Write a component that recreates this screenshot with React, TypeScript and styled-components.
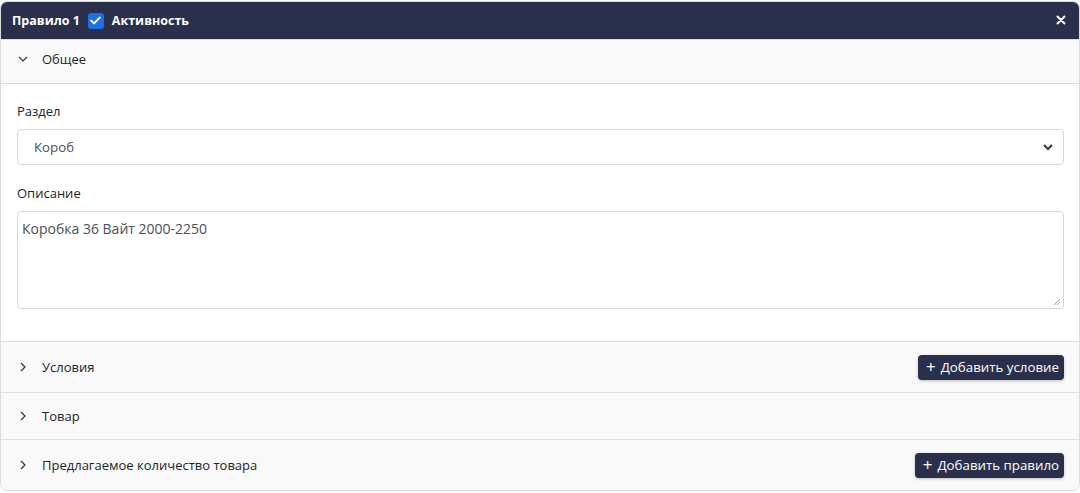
import React from "react";
import styled, { createGlobalStyle } from "styled-components";

const Global = createGlobalStyle`
  html, body { margin: 0; padding: 0; background: #ffffff; }
  body { font-family: "Open Sans", "Noto Sans", sans-serif; color: #212529; }
  * { box-sizing: border-box; }
`;

const Card = styled.div`
  margin: 1px 0 0 0;
  width: 1080px;
  border: 1px solid #dcdcdc;
  border-radius: 7px;
  overflow: hidden;
  background: #fff;
`;

const Header = styled.div`
  height: 37px;
  background: #2a2f4b;
  display: flex;
  align-items: center;
  padding: 0 12px 0 11px;
  color: #fff;
  font-weight: 700;
  font-size: 12.5px;
`;

const Title = styled.span`
  margin-right: 8px;
`;

const Check = styled.span`
  width: 16px;
  height: 16px;
  border-radius: 3px;
  background: #1f6fe5;
  display: inline-flex;
  align-items: center;
  justify-content: center;
  margin-right: 8px;
`;

const Spacer = styled.div`
  flex: 1;
`;

const Close = styled.span`
  display: inline-flex;
  align-items: center;
  justify-content: center;
  width: 12px;
  height: 12px;
  margin-top: -1px;
`;

const SectionHead = styled.div<{ $h: number; $lift?: number }>`
  height: ${(p) => p.$h}px;
  background: #f9f9f9;
  border-top: 1px solid #dedede;
  display: flex;
  align-items: center;
  padding: 0 15px ${(p) => p.$lift ?? 0}px 17px;
  font-size: 13px;
  color: #212529;
  &:first-child { border-top: none; }
`;

const Chevron = styled.span`
  width: 10px;
  height: 10px;
  display: inline-flex;
  align-items: center;
  justify-content: center;
  margin-right: 14px;
`;

const SectionBody = styled.div`
  border-top: 1px solid #dedede;
  padding: 18px 15px 32px 16px;
  display: flex;
  flex-direction: column;
`;

const Label = styled.label`
  font-size: 13px;
  color: #212529;
  margin-bottom: 9px;
  line-height: 18px;
`;

const Select = styled.div`
  height: 36px;
  border: 1px solid #d4d6da;
  border-radius: 4px;
  display: flex;
  align-items: center;
  padding: 0 9px 0 16px;
  font-size: 13.3px;
  color: #495057;
  margin-bottom: 19px;
`;

const Textarea = styled.div`
  position: relative;
  height: 98px;
  border: 1px solid #d4d6da;
  border-radius: 4px;
  padding: 8px 4px;
  font-size: 14px;
  color: #495057;
  line-height: 18px;
`;

const Grip = styled.span`
  position: absolute;
  right: 2px;
  bottom: 2px;
  width: 8px;
  height: 8px;
  display: flex;
`;

const AddButton = styled.button`
  height: 25px;
  background: #2a2f4b;
  color: #fff;
  border: none;
  border-radius: 4px;
  font-family: inherit;
  font-size: 13.3px;
  padding: 0 5px 0 8px;
  display: inline-flex;
  align-items: center;
  gap: 5px;
  box-shadow: 0 1px 3px rgba(0, 0, 0, 0.25);
  cursor: pointer;
`;

const Plus = styled.span`
  font-size: 17px;
  font-weight: 500;
  line-height: 1;
  margin-top: -2px;
`;

const ChevronRight = () => (
  <svg width="8" height="10" viewBox="0 0 8 10">
    <path d="M2 1 L6 5 L2 9" fill="none" stroke="#333" strokeWidth="1.2" />
  </svg>
);

const ChevronDown = () => (
  <svg width="10" height="8" viewBox="0 0 10 8">
    <path d="M1 2 L5 6 L9 2" fill="none" stroke="#333" strokeWidth="1.2" />
  </svg>
);

export default function App() {
  return (
    <>
      <Global />
      <Card>
        <Header>
          <Title>Правило 1</Title>
          <Check>
            <svg width="11" height="9" viewBox="0 0 11 9">
              <path d="M1.2 4.6 L4 7.4 L9.8 1.6" fill="none" stroke="#fff" strokeWidth="2" strokeLinecap="round" strokeLinejoin="round" />
            </svg>
          </Check>
          <span>Активность</span>
          <Spacer />
          <Close>
            <svg width="10" height="10" viewBox="0 0 10 10">
              <path d="M1.5 1.5 L8.5 8.5 M8.5 1.5 L1.5 8.5" stroke="#fff" strokeWidth="2" strokeLinecap="round" />
            </svg>
          </Close>
        </Header>
        <SectionHead $h={44} $lift={5}>
          <Chevron><ChevronDown /></Chevron>
          Общее
        </SectionHead>
        <SectionBody>
          <Label>Раздел</Label>
          <Select>
            <span>Короб</span>
            <Spacer />
            <svg width="12" height="8" viewBox="0 0 12 8">
              <path d="M2 2 L6 6 L10 2" fill="none" stroke="#343a40" strokeWidth="2" />
            </svg>
          </Select>
          <Label>Описание</Label>
          <Textarea>
            Коробка 36 Вайт 2000-2250
            <Grip>
              <svg width="8" height="8" viewBox="0 0 8 8">
                <path d="M1 7 L7 1 M4 7 L7 4" stroke="#888" strokeWidth="0.8" />
              </svg>
            </Grip>
          </Textarea>
        </SectionBody>
        <SectionHead $h={51}>
          <Chevron><ChevronRight /></Chevron>
          Условия
          <Spacer />
          <AddButton><Plus>+</Plus>Добавить условие</AddButton>
        </SectionHead>
        <SectionHead $h={47}>
          <Chevron><ChevronRight /></Chevron>
          Товар
        </SectionHead>
        <SectionHead $h={51}>
          <Chevron><ChevronRight /></Chevron>
          Предлагаемое количество товара
          <Spacer />
          <AddButton><Plus>+</Plus>Добавить правило</AddButton>
        </SectionHead>
      </Card>
    </>
  );
}
